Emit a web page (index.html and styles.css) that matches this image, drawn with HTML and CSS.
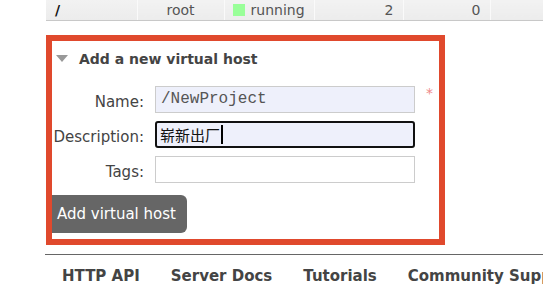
FILE: index.html
```html
<!DOCTYPE html>
<html lang="en">
<head>
    <meta charset="UTF-8">
    <meta name="viewport" content="width=device-width, initial-scale=1.0">
    <title>Virtual Hosts</title>
    <link rel="stylesheet" href="styles.css">
</head>
<body>
    <div class="page">
        <table class="vhosts">
            <colgroup>
                <col class="c-name">
                <col class="c-user">
                <col class="c-state">
                <col class="c-num">
                <col class="c-num2">
                <col class="c-last">
            </colgroup>
            <tr>
                <td class="name">/</td>
                <td class="center">root</td>
                <td class="state-cell"><span class="state"></span>running</td>
                <td class="num">2</td>
                <td class="num">0</td>
                <td></td>
            </tr>
        </table>

        <div class="section">
            <h2><span class="arrow"></span>Add a new virtual host</h2>
            <div class="form">
                <label for="vhost-name">Name:</label>
                <input type="text" id="vhost-name" class="filled" value="/NewProject">
                <span class="mand">*</span>

                <label>Description:</label>
                <div class="fake-input focused">崭新出厂<span class="caret"></span></div>
                <span></span>

                <label for="vhost-tags">Tags:</label>
                <input type="text" id="vhost-tags">
                <span></span>
            </div>
            <button class="add-btn">Add virtual host</button>
        </div>

        <div class="footer">
            <a href="#">HTTP API</a>
            <a href="#">Server Docs</a>
            <a href="#">Tutorials</a>
            <a href="#">Community Support</a>
        </div>
    </div>
</body>
</html>
```

FILE: styles.css
```css
body {
    margin: 0;
    font-family: "DejaVu Sans", Verdana, sans-serif;
    color: #444;
    background-color: #fff;
    overflow: hidden;
}
.page {
    padding-left: 45px;
    width: 700px;
}
.vhosts {
    border-collapse: collapse;
    table-layout: fixed;
    width: 544px;
    margin-left: 1px;
    font-size: 14px;
}
.vhosts col.c-name { width: 91px; }
.vhosts col.c-user { width: 87px; }
.vhosts col.c-state { width: 90px; }
.vhosts col.c-num { width: 89px; }
.vhosts col.c-num2 { width: 87px; }
.vhosts col.c-last { width: 100px; }
.vhosts td {
    height: 20px;
    padding: 0 9px;
    box-sizing: border-box;
    background: linear-gradient(#f2f2f2, #ececec);
    border-right: 1px solid #fafafa;
    border-bottom: 1px solid #c8c8c8;
    color: #555;
    white-space: nowrap;
    overflow: hidden;
    line-height: 16px;
    vertical-align: bottom;
    padding-bottom: 2px;
}
.vhosts td.name {
    color: #111;
    font-weight: bold;
}
.vhosts td.center {
    text-align: center;
}
.vhosts td.state-cell {
    padding-left: 8px;
    padding-right: 0;
}
.vhosts td.num {
    text-align: right;
}
.state {
    display: inline-block;
    width: 12px;
    height: 12px;
    background-color: #9f9;
    margin-right: 6px;
    vertical-align: -1px;
}
.section {
    margin: 14px 0 0 1px;
    width: 399px;
    height: 210px;
    box-sizing: border-box;
    border: 6px solid #e0492d;
}
.section h2 {
    margin: 0;
    padding: 9px 0 0 4px;
    font-size: 14px;
    line-height: 18px;
    color: #444;
}
.arrow {
    display: inline-block;
    width: 0;
    height: 0;
    border-left: 6px solid transparent;
    border-right: 6px solid transparent;
    border-top: 7px solid #999;
    margin-right: 11px;
    vertical-align: 2px;
}
.form {
    display: grid;
    grid-template-columns: 92px 260px 20px;
    column-gap: 11px;
    row-gap: 8px;
    align-items: center;
    margin-top: 18px;
}
.form label {
    text-align: right;
    font-size: 15px;
    color: #444;
    padding-top: 5px;
}
.form input, .fake-input {
    height: 27px;
    box-sizing: border-box;
    border: 1px solid #ccc;
    padding: 0 4px;
    font-size: 15px;
    margin: 0;
}
.form input.filled {
    background-color: #eef0fb;
    font-family: "Liberation Mono", monospace;
    font-size: 16px;
    color: #555;
    padding-left: 5px;
}
.fake-input {
    display: flex;
    align-items: center;
    background-color: #eef0fb;
    color: #111;
    font-family: "Noto Sans CJK SC", sans-serif;
}
.fake-input.focused {
    border: 2px solid #111;
    border-radius: 3px;
    padding: 0 3px;
}
.caret {
    display: inline-block;
    width: 2px;
    height: 19px;
    background-color: #000;
    margin-left: 1px;
}
.mand {
    color: #e88;
    font-size: 14px;
    align-self: start;
    line-height: 14px;
}
.add-btn {
    display: block;
    margin-top: 12px;
    width: 135px;
    height: 38px;
    border: none;
    border-radius: 0 6px 6px 0;
    background-color: #666;
    color: #fff;
    font-family: inherit;
    font-size: 15px;
    padding: 0 0 0 5px;
    text-align: left;
}
.footer {
    margin-top: 9px;
    border-top: 1px solid #666;
    padding: 12px 0 0 17px;
    display: flex;
    gap: 31px;
    white-space: nowrap;
}
.footer a {
    font-size: 15px;
    font-weight: bold;
    line-height: 18px;
    color: #444;
    text-decoration: none;
}
```
